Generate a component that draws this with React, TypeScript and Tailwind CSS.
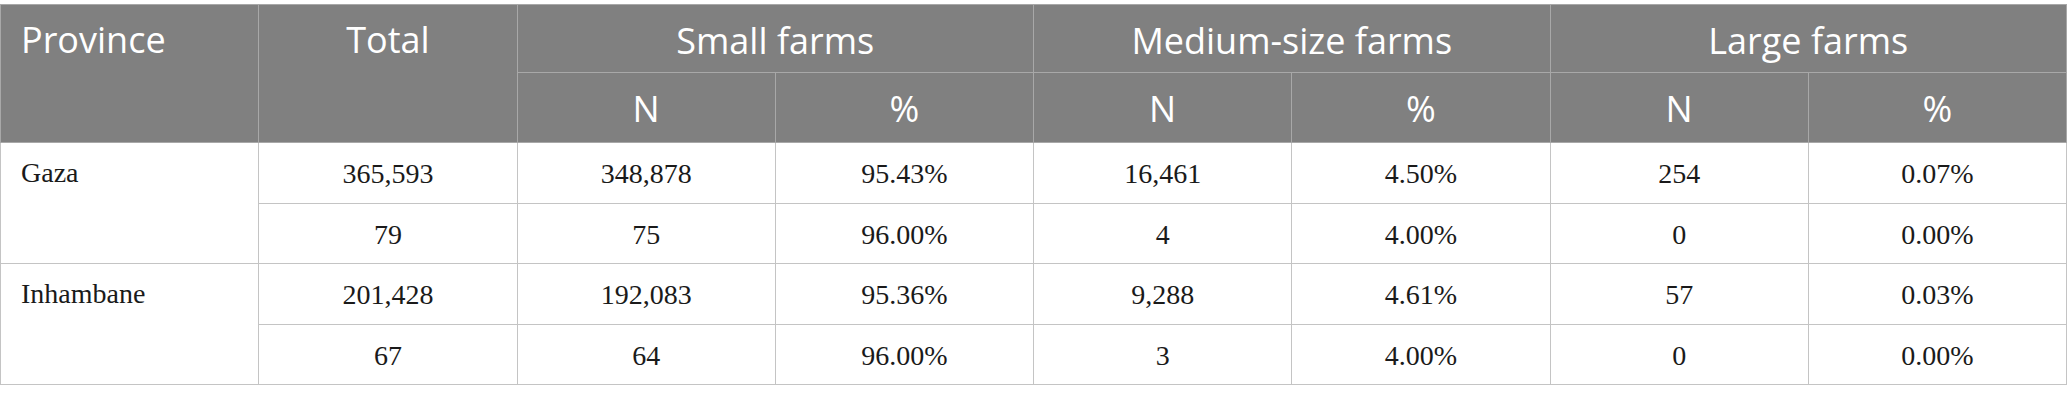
const rows = [
  {
    province: "Gaza",
    lines: [
      ["365,593", "348,878", "95.43%", "16,461", "4.50%", "254", "0.07%"],
      ["79", "75", "96.00%", "4", "4.00%", "0", "0.00%"],
    ],
  },
  {
    province: "Inhambane",
    lines: [
      ["201,428", "192,083", "95.36%", "9,288", "4.61%", "57", "0.03%"],
      ["67", "64", "96.00%", "3", "4.00%", "0", "0.00%"],
    ],
  },
];

const head = "border border-[#a8a8a8] bg-[#808080] text-white font-normal";
const cell = "border border-[#c4c4c4] h-[60.6px] text-center align-middle pt-[2px]";

export default function App() {
  return (
    <div className="w-[2067px] pt-1 bg-white">
      <table className="w-full table-fixed border-collapse">
        <colgroup>
          {[0, 1, 2, 3, 4, 5, 6, 7].map((i) => (
            <col key={i} className="w-[12.5%]" />
          ))}
        </colgroup>
        <thead className="font-['Open_Sans',sans-serif] text-[36px] leading-[1.2]">
          <tr className="h-[68px]">
            <th rowSpan={2} className={`${head} align-top text-left pl-[20px] pt-[13px]`}>
              Province
            </th>
            <th rowSpan={2} className={`${head} align-top text-center pt-[13px]`}>
              Total
            </th>
            <th colSpan={2} className={`${head} text-center align-middle pt-[5px]`}>
              Small farms
            </th>
            <th colSpan={2} className={`${head} text-center align-middle pt-[5px]`}>
              Medium-size farms
            </th>
            <th colSpan={2} className={`${head} text-center align-middle pt-[5px]`}>
              Large farms
            </th>
          </tr>
          <tr className="h-[70px]">
            {["N", "%", "N", "%", "N", "%"].map((t, i) => (
              <th key={i} className={`${head} text-center align-middle pt-[3px]`}>
                {t}
              </th>
            ))}
          </tr>
        </thead>
        <tbody className="font-['Liberation_Serif',serif] text-[28px] leading-[1.2] text-[#1a1a1a]">
          {rows.map((r) =>
            r.lines.map((line, li) => (
              <tr key={r.province + li}>
                {li === 0 && (
                  <td rowSpan={2} className="border border-[#c4c4c4] align-top text-left pl-[20px] pt-[13px]">
                    {r.province}
                  </td>
                )}
                {line.map((v, vi) => (
                  <td key={vi} className={cell}>
                    {v}
                  </td>
                ))}
              </tr>
            ))
          )}
        </tbody>
      </table>
    </div>
  );
}
